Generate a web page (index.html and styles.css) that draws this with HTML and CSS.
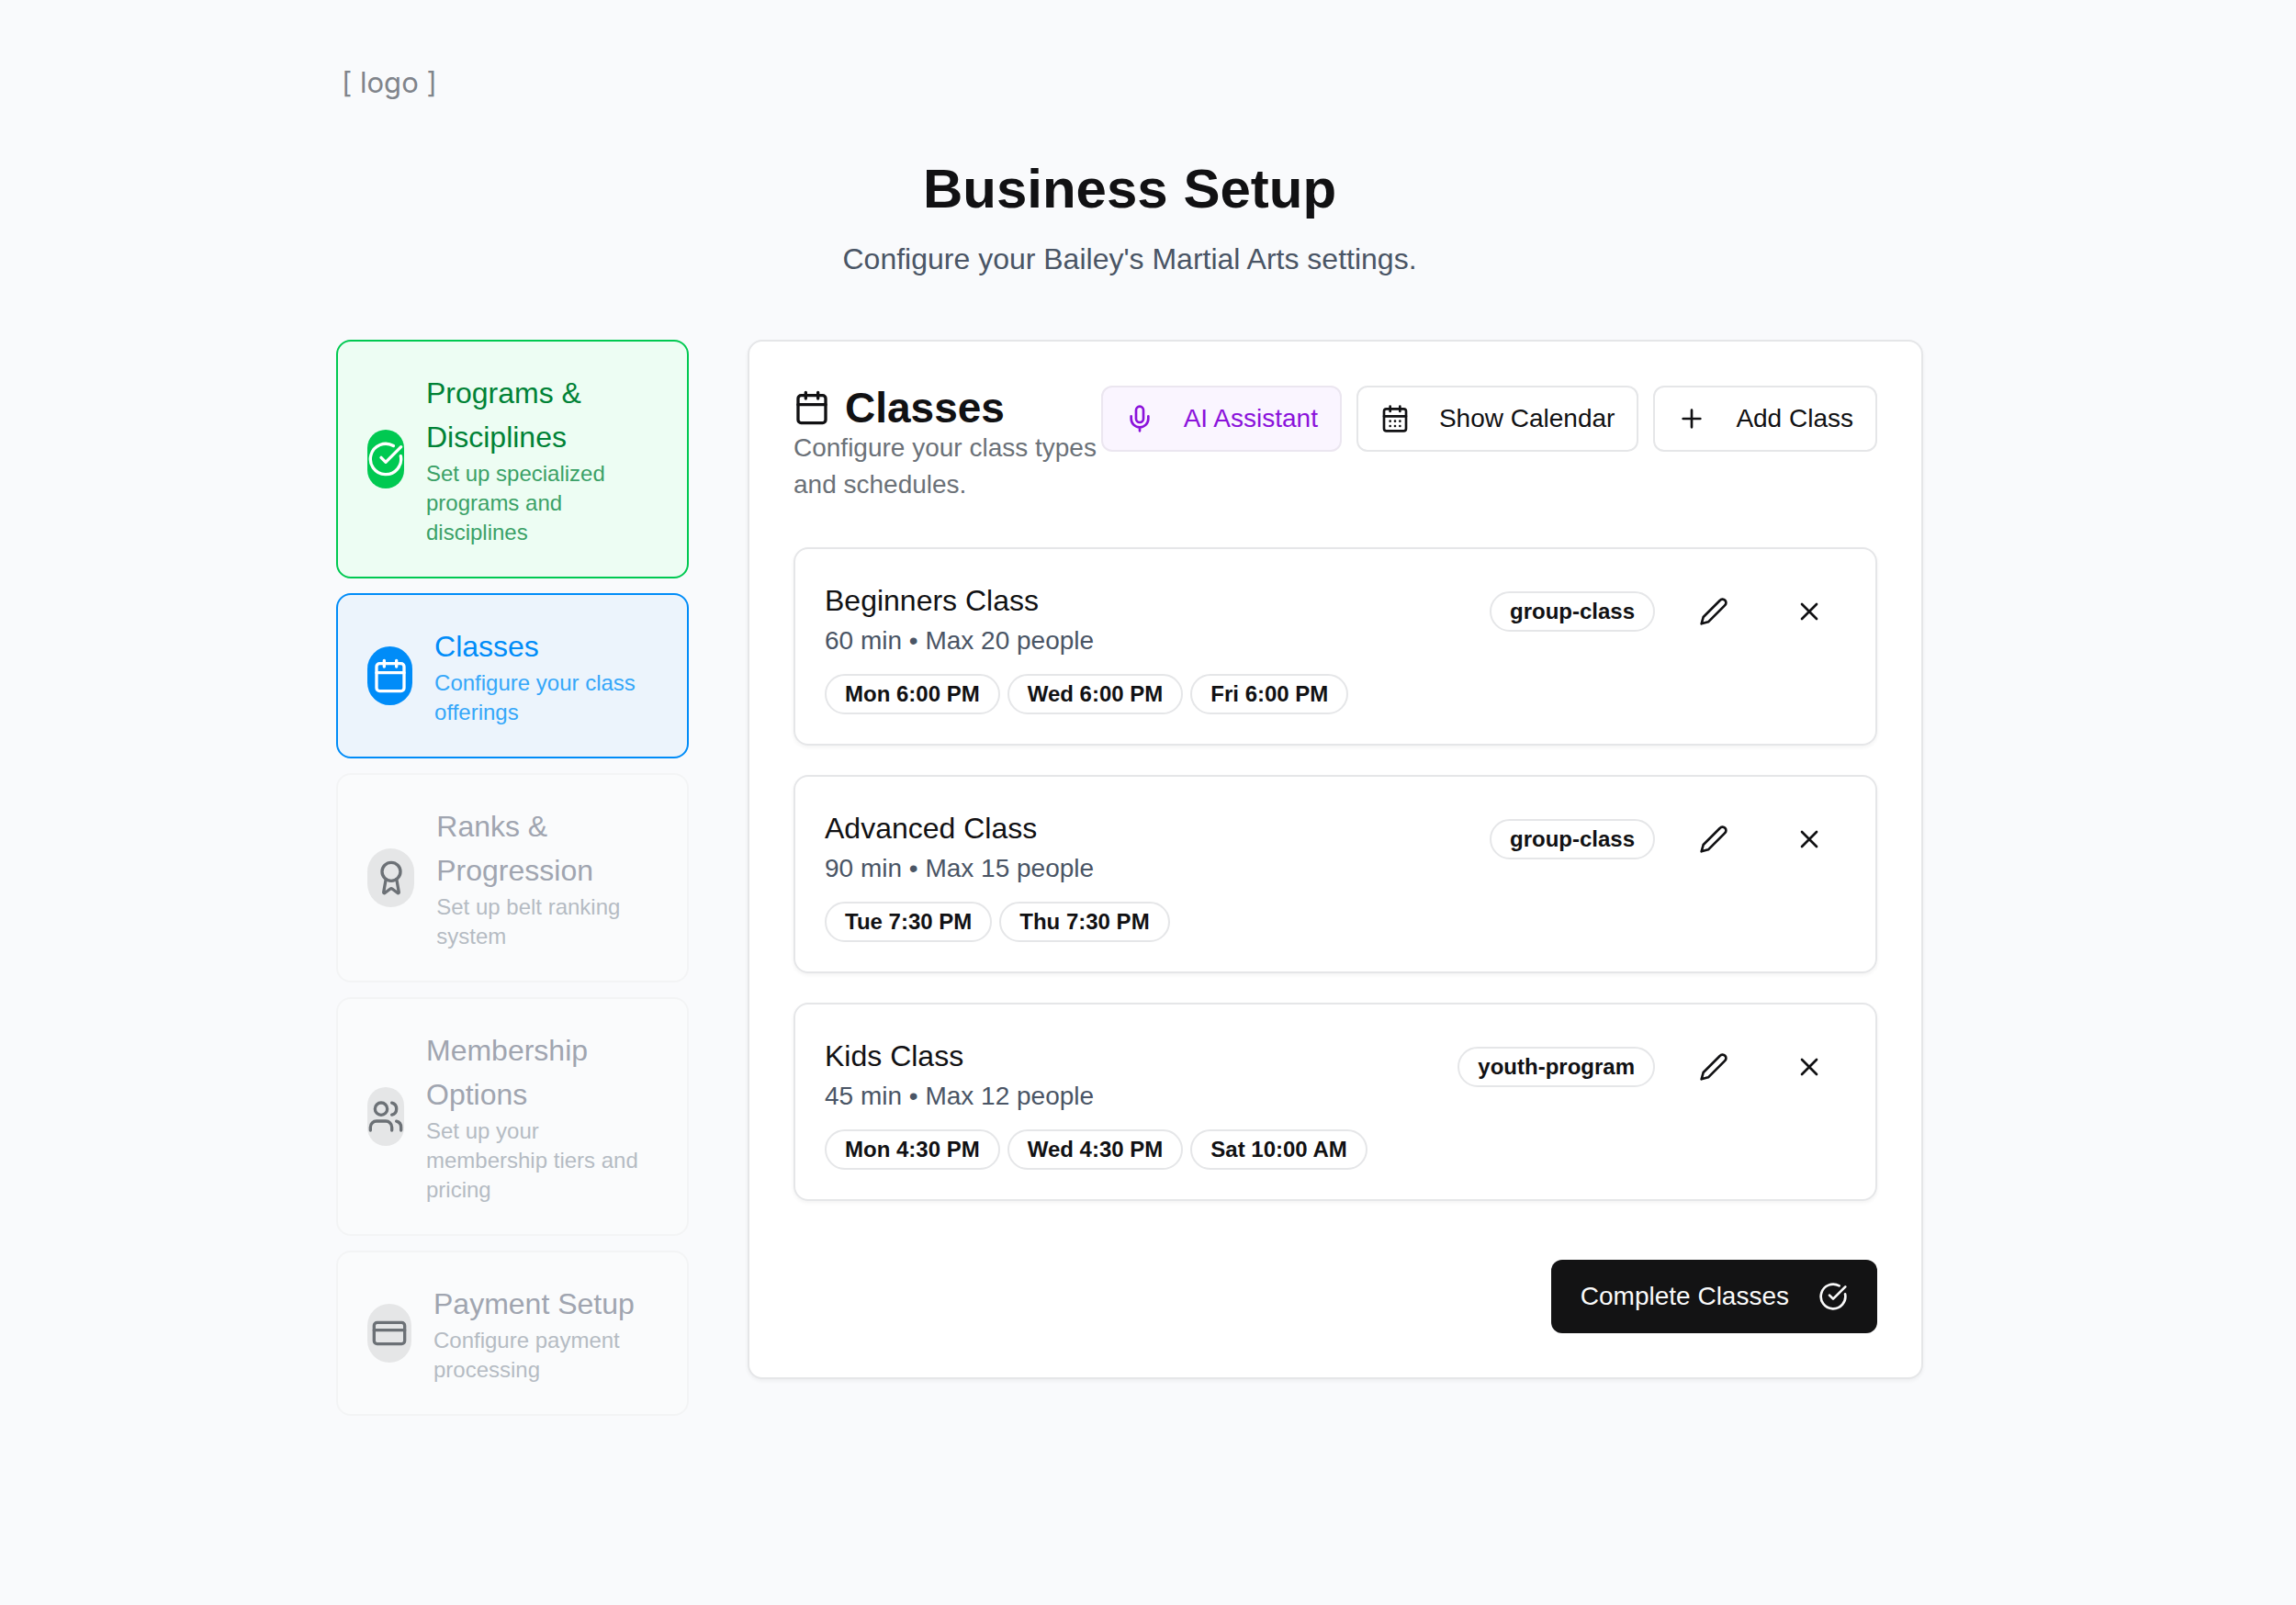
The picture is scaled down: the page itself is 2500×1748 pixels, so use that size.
FILE: index.html
```html
<!DOCTYPE html>
<html lang="en">
<head>
<meta charset="utf-8">
<meta name="viewport" content="width=device-width, initial-scale=1">
<title>Business Setup</title>
<link rel="stylesheet" href="styles.css">
</head>
<body>
<svg class="sprite" aria-hidden="true">
  <symbol id="i-check" viewBox="0 0 24 24"><path d="M21.801 10A10 10 0 1 1 17 3.335"/><path d="m9 11 3 3L22 4"/></symbol>
  <symbol id="i-calendar" viewBox="0 0 24 24"><path d="M8 2v4M16 2v4"/><rect width="18" height="18" x="3" y="4" rx="2"/><path d="M3 10h18"/></symbol>
  <symbol id="i-days" viewBox="0 0 24 24"><path d="M8 2v4M16 2v4"/><rect width="18" height="18" x="3" y="4" rx="2"/><path d="M3 10h18M8 14h.01M12 14h.01M16 14h.01M8 18h.01M12 18h.01M16 18h.01"/></symbol>
  <symbol id="i-award" viewBox="0 0 24 24"><path d="m15.477 12.89 1.515 8.526a.5.5 0 0 1-.81.47l-3.58-2.687a1 1 0 0 0-1.197 0l-3.586 2.686a.5.5 0 0 1-.81-.469l1.514-8.526"/><circle cx="12" cy="8" r="6"/></symbol>
  <symbol id="i-users" viewBox="0 0 24 24"><path d="M16 21v-2a4 4 0 0 0-4-4H6a4 4 0 0 0-4 4v2"/><circle cx="9" cy="7" r="4"/><path d="M22 21v-2a4 4 0 0 0-3-3.87M16 3.13a4 4 0 0 1 0 7.75"/></symbol>
  <symbol id="i-card" viewBox="0 0 24 24"><rect width="20" height="14" x="2" y="5" rx="2"/><path d="M2 10h20"/></symbol>
  <symbol id="i-mic" viewBox="0 0 24 24"><path d="M12 19v3M19 10v2a7 7 0 0 1-14 0v-2"/><rect x="9" y="2" width="6" height="13" rx="3"/></symbol>
  <symbol id="i-plus" viewBox="0 0 24 24"><path d="M5 12h14M12 5v14"/></symbol>
  <symbol id="i-pencil" viewBox="0 0 24 24"><path d="M17 3a2.85 2.83 0 1 1 4 4L7.5 20.500 2 22l1.500-5.500Z"/></symbol>
  <symbol id="i-x" viewBox="0 0 24 24"><path d="M18 6 6 18M6 6l12 12"/></symbol>
</svg>

<div class="page">
  <header class="page-header">
    <div class="logo">[ logo ]</div>
    <h1 class="page-title">Business Setup</h1>
    <p class="page-subtitle">Configure your Bailey's Martial Arts settings.</p>
  </header>

  <div class="layout">
    <nav class="steps" aria-label="Setup steps">
      <button type="button" class="step step-done">
        <span class="step-icon"><svg class="icon icon-lg"><use href="#i-check"/></svg></span>
        <span class="step-text"><span class="step-title">Programs &amp; Disciplines</span><span class="step-desc">Set up specialized programs and disciplines</span></span>
      </button>
      <button type="button" class="step step-current" aria-current="step">
        <span class="step-icon"><svg class="icon icon-lg"><use href="#i-calendar"/></svg></span>
        <span class="step-text"><span class="step-title">Classes</span><span class="step-desc">Configure your class offerings</span></span>
      </button>
      <button type="button" class="step step-locked" disabled>
        <span class="step-icon"><svg class="icon icon-lg"><use href="#i-award"/></svg></span>
        <span class="step-text"><span class="step-title">Ranks &amp; Progression</span><span class="step-desc">Set up belt ranking system</span></span>
      </button>
      <button type="button" class="step step-locked" disabled>
        <span class="step-icon"><svg class="icon icon-lg"><use href="#i-users"/></svg></span>
        <span class="step-text"><span class="step-title">Membership Options</span><span class="step-desc">Set up your membership tiers and pricing</span></span>
      </button>
      <button type="button" class="step step-locked" disabled>
        <span class="step-icon"><svg class="icon icon-lg"><use href="#i-card"/></svg></span>
        <span class="step-text"><span class="step-title">Payment Setup</span><span class="step-desc">Configure payment processing</span></span>
      </button>
    </nav>

    <main class="panel">
      <div class="panel-header">
        <div class="panel-heading">
          <h2 class="panel-title"><svg class="icon icon-lg" aria-hidden="true"><use href="#i-calendar"/></svg>Classes</h2>
          <p class="panel-desc">Configure your class types and schedules.</p>
        </div>
        <div class="panel-actions">
          <button type="button" class="btn btn-ai"><svg class="icon"><use href="#i-mic"/></svg>AI Assistant</button>
          <button type="button" class="btn"><svg class="icon"><use href="#i-days"/></svg>Show Calendar</button>
          <button type="button" class="btn"><svg class="icon"><use href="#i-plus"/></svg>Add Class</button>
        </div>
      </div>

      <div class="class-list">
        <article class="class-card">
          <div class="class-info">
            <h3 class="class-name">Beginners Class</h3>
            <p class="class-meta">60 min • Max 20 people</p>
            <div class="times"><span class="badge">Mon 6:00 PM</span><span class="badge">Wed 6:00 PM</span><span class="badge">Fri 6:00 PM</span></div>
          </div>
          <div class="class-actions">
            <span class="badge">group-class</span>
            <button type="button" class="icon-btn" aria-label="Edit Beginners Class"><svg class="icon"><use href="#i-pencil"/></svg></button>
            <button type="button" class="icon-btn" aria-label="Remove Beginners Class"><svg class="icon"><use href="#i-x"/></svg></button>
          </div>
        </article>
        <article class="class-card">
          <div class="class-info">
            <h3 class="class-name">Advanced Class</h3>
            <p class="class-meta">90 min • Max 15 people</p>
            <div class="times"><span class="badge">Tue 7:30 PM</span><span class="badge">Thu 7:30 PM</span></div>
          </div>
          <div class="class-actions">
            <span class="badge">group-class</span>
            <button type="button" class="icon-btn" aria-label="Edit Advanced Class"><svg class="icon"><use href="#i-pencil"/></svg></button>
            <button type="button" class="icon-btn" aria-label="Remove Advanced Class"><svg class="icon"><use href="#i-x"/></svg></button>
          </div>
        </article>
        <article class="class-card">
          <div class="class-info">
            <h3 class="class-name">Kids Class</h3>
            <p class="class-meta">45 min • Max 12 people</p>
            <div class="times"><span class="badge">Mon 4:30 PM</span><span class="badge">Wed 4:30 PM</span><span class="badge">Sat 10:00 AM</span></div>
          </div>
          <div class="class-actions">
            <span class="badge">youth-program</span>
            <button type="button" class="icon-btn" aria-label="Edit Kids Class"><svg class="icon"><use href="#i-pencil"/></svg></button>
            <button type="button" class="icon-btn" aria-label="Remove Kids Class"><svg class="icon"><use href="#i-x"/></svg></button>
          </div>
        </article>
      </div>

      <div class="panel-footer">
        <button type="button" class="btn-primary">Complete Classes<svg class="icon"><use href="#i-check"/></svg></button>
      </div>
    </main>
  </div>
</div>
</body>
</html>
```
FILE: styles.css
```css
*,
*::before,
*::after {
  box-sizing: border-box;
}

body {
  margin: 0;
  padding-right: 40px;
  background: #f9fafc;
  color: #111113;
  font-family: "Liberation Sans", Arial, sans-serif;
  font-size: 28px;
  line-height: 40px;
}

h1, h2, h3, p {
  margin: 0;
}

button {
  font: inherit;
  color: inherit;
  cursor: pointer;
}

.sprite {
  display: none;
}

.icon {
  flex: none;
  width: 32px;
  height: 32px;
  fill: none;
  stroke: currentColor;
  stroke-width: 2;
  stroke-linecap: round;
  stroke-linejoin: round;
}

.icon-lg {
  width: 40px;
  height: 40px;
}

.page {
  max-width: 1792px;
  margin: 0 auto;
  padding: 70px 32px 64px;
}

/* Header */
.page-header {
  margin-bottom: 64px;
  text-align: center;
}

.logo {
  padding-left: 6px;
  margin-bottom: 60px;
  color: #80848b;
  font-family: Inter, sans-serif;
  font-size: 31px;
  text-align: left;
}

.page-title {
  font-size: 60px;
  line-height: 72px;
}

.page-subtitle {
  margin-top: 16px;
  color: #4a5565;
  font-size: 32px;
  line-height: 48px;
}

.layout {
  display: grid;
  grid-template-columns: minmax(0, 3fr) minmax(0, 10fr);
  gap: 64px;
  align-items: start;
}

/* Setup steps */
.steps {
  display: flex;
  flex-direction: column;
  gap: 16px;
}

.step {
  display: flex;
  align-items: center;
  gap: 24px;
  padding: 32px;
  border: 2px solid #f3f4f5;
  border-radius: 16px;
  background: #fafbfc;
  text-align: left;
}

.step-icon {
  display: flex;
  align-items: center;
  justify-content: center;
  width: 64px;
  height: 64px;
  border-radius: 32px;
}

.step-title,
.step-desc {
  display: block;
}

.step-title {
  font-size: 32px;
  line-height: 48px;
}

.step-desc {
  font-size: 24px;
  line-height: 32px;
}

.step-done {
  border-color: #00c951;
  background: #edfdf3;
}

.step-done .step-icon {
  background: #00c951;
  color: #fff;
}

.step-done .step-title {
  color: #008236;
}

.step-done .step-desc {
  color: #3ba167;
}

.step-current {
  border-color: #008cf8;
  background: #ecf4fc;
}

.step-current .step-icon {
  background: #008cf8;
  color: #fff;
}

.step-current .step-title {
  color: #008cf8;
}

.step-current .step-desc {
  color: #35a7f9;
}

.step-locked {
  cursor: not-allowed;
}

.step-locked .step-icon {
  background: #e5e6e7;
  color: #6c7176;
}

.step-locked .step-title {
  color: #a0a5b0;
}

.step-locked .step-desc {
  color: #b5bbc3;
}

/* Panel */
.panel {
  padding: 48px;
  border: 2px solid #e5e6e8;
  border-radius: 16px;
  background: #fff;
  box-shadow: 0 2px 4px rgba(0, 0, 0, 0.05);
}

.panel-header {
  display: flex;
  align-items: flex-start;
  justify-content: space-between;
  margin-bottom: 48px;
}

.panel-title {
  display: flex;
  align-items: center;
  gap: 16px;
  font-size: 46px;
  line-height: 48px;
}

.panel-desc {
  color: #6b7178;
}

.panel-actions {
  display: flex;
  flex: none;
  gap: 16px;
}

.btn,
.btn-primary {
  display: flex;
  align-items: center;
  gap: 32px;
  white-space: nowrap;
  border-radius: 12px;
}

.btn {
  padding: 14px 24px;
  border: 2px solid #e5e6e8;
  background: #fff;
}

.btn-ai {
  border-color: #ebe6f0;
  background: #faf5ff;
  color: #8b12db;
}

.btn-primary {
  padding: 20px 32px;
  border: 0;
  background: #131314;
  color: #fafafa;
}

.class-list {
  display: flex;
  flex-direction: column;
  gap: 32px;
}

.class-card {
  display: flex;
  align-items: flex-start;
  justify-content: space-between;
  padding: 32px;
  border: 2px solid #e5e6e8;
  border-radius: 16px;
  box-shadow: 0 2px 4px rgba(0, 0, 0, 0.05);
}

.class-name {
  font-size: 32px;
  font-weight: 400;
  line-height: 48px;
}

.class-meta {
  color: #4a5565;
}

.times {
  display: flex;
  flex-wrap: wrap;
  gap: 8px;
  margin-top: 16px;
}

.badge {
  padding: 4px 20px;
  border: 2px solid #e5e6e8;
  border-radius: 22px;
  font-size: 24px;
  font-weight: 700;
  line-height: 32px;
  white-space: nowrap;
}

.class-actions {
  display: flex;
  align-items: center;
  gap: 24px;
}

.icon-btn {
  display: flex;
  padding: 20px 24px;
  border: 0;
  border-radius: 12px;
  background: none;
}

.panel-footer {
  display: flex;
  justify-content: flex-end;
  margin-top: 64px;
}
```
